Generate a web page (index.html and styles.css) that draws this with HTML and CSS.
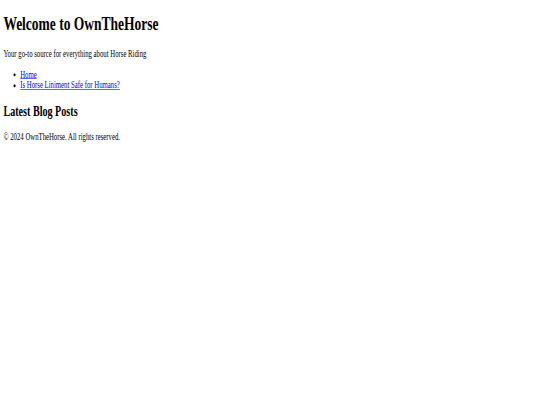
FILE: index.html
```html
<!DOCTYPE html>
<html lang="en">
<head>
<meta charset="utf-8">
<title>OwnTheHorse</title>
<link rel="stylesheet" href="styles.css">
</head>
<body>
<div class="viewport">
  <div class="stage">
    <div class="page">
      <header>
        <h1 class="title">Welcome to OwnTheHorse</h1>
        <p class="tagline">Your go-to source for everything about Horse Riding</p>
        <nav>
          <ul class="nav-list">
            <li><a href="#">Home</a></li>
            <li><a href="#">Is Horse Liniment Safe for Humans?</a></li>
          </ul>
        </nav>
      </header>
      <main>
        <h2 class="section-title">Latest Blog Posts</h2>
      </main>
      <footer>
        <p class="copyright">© 2024 OwnTheHorse. All rights reserved.</p>
      </footer>
    </div>
  </div>
</div>
</body>
</html>
```
FILE: styles.css
```css
html, body {
  margin: 0;
  padding: 0;
  background: #fff;
}
.viewport {
  width: 540px;
  height: 405px;
  overflow: hidden;
}
.stage {
  display: flow-root;
  width: 1280px;
  transform-origin: 0 0;
  transform: scale(0.421875, 0.606);
  font-family: "Liberation Serif", "Times New Roman", serif;
  font-size: 16px;
  color: #000;
}
.page {
  margin: 8px;
}
.title {
  font-size: 32px;
  font-weight: bold;
  margin: 21.44px 0;
}
.tagline {
  margin: 16px 0;
}
.nav-list {
  margin: 16px 0;
  padding-left: 40px;
  list-style: disc;
}
.nav-list a {
  color: #0000ee;
  text-decoration: underline;
}
.section-title {
  font-size: 24px;
  font-weight: bold;
  margin: 19.92px 0;
}
.copyright {
  margin: 16px 0;
}
```
